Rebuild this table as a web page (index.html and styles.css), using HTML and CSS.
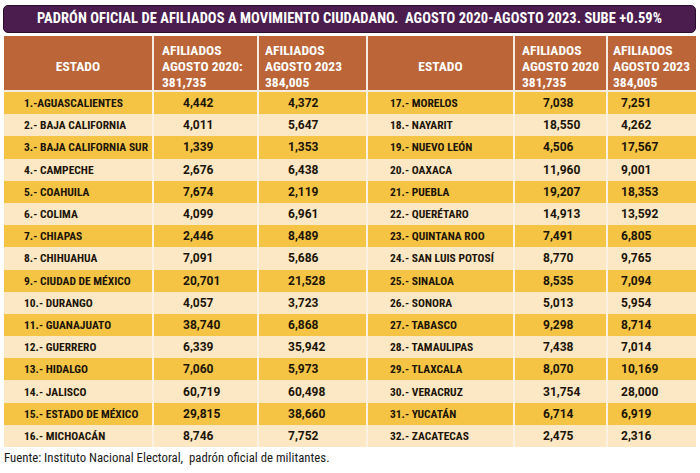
FILE: index.html
```html
<!DOCTYPE html>
<html lang="es">
<head>
<meta charset="utf-8">
<title>Padrón MC</title>
<link rel="stylesheet" href="styles.css">
</head>
<body>
<div class="page">
  <h1 class="title">PADRÓN OFICIAL DE AFILIADOS A MOVIMIENTO CIUDADANO.&nbsp; AGOSTO 2020-AGOSTO 2023. SUBE +0.59%</h1>
  <table class="padron">
    <colgroup>
      <col class="c-est1"><col class="c-a"><col class="c-b">
      <col class="c-est2"><col class="c-c"><col class="c-d">
    </colgroup>
    <thead>
      <tr>
        <th class="h-est">ESTADO</th>
        <th class="h-num h2">AFILIADOS<br>AGOSTO 2020:<br>381,735</th>
        <th class="h-num h3">AFILIADOS<br>AGOSTO 2023<br>384,005</th>
        <th class="h-est">ESTADO</th>
        <th class="h-num h5">AFILIADOS<br>AGOSTO 2020<br>381,735</th>
        <th class="h-num h6">AFILIADOS<br>AGOSTO 2023<br>384,005</th>
      </tr>
    </thead>
    <tbody>
      <tr class="odd"><td class="name">1.-AGUASCALIENTES</td><td class="n2">4,442</td><td class="n3">4,372</td><td class="name r">17.- MORELOS</td><td class="n5">7,038</td><td class="n6">7,251</td></tr>
      <tr class="even"><td class="name">2.- BAJA CALIFORNIA</td><td class="n2">4,011</td><td class="n3">5,647</td><td class="name r">18.- NAYARIT</td><td class="n5">18,550</td><td class="n6">4,262</td></tr>
      <tr class="odd"><td class="name">3.- BAJA CALIFORNIA SUR</td><td class="n2">1,339</td><td class="n3">1,353</td><td class="name r">19.- NUEVO LEÓN</td><td class="n5">4,506</td><td class="n6">17,567</td></tr>
      <tr class="even"><td class="name">4.- CAMPECHE</td><td class="n2">2,676</td><td class="n3">6,438</td><td class="name r">20.- OAXACA</td><td class="n5">11,960</td><td class="n6">9,001</td></tr>
      <tr class="odd"><td class="name">5.- COAHUILA</td><td class="n2">7,674</td><td class="n3">2,119</td><td class="name r">21.- PUEBLA</td><td class="n5">19,207</td><td class="n6">18,353</td></tr>
      <tr class="even"><td class="name">6.- COLIMA</td><td class="n2">4,099</td><td class="n3">6,961</td><td class="name r">22.- QUERÉTARO</td><td class="n5">14,913</td><td class="n6">13,592</td></tr>
      <tr class="odd"><td class="name">7.- CHIAPAS</td><td class="n2">2,446</td><td class="n3">8,489</td><td class="name r">23.- QUINTANA ROO</td><td class="n5">7,491</td><td class="n6">6,805</td></tr>
      <tr class="even"><td class="name">8.- CHIHUAHUA</td><td class="n2">7,091</td><td class="n3">5,686</td><td class="name r">24.- SAN LUIS POTOSÍ</td><td class="n5">8,770</td><td class="n6">9,765</td></tr>
      <tr class="odd"><td class="name">9.- CIUDAD DE MÉXICO</td><td class="n2">20,701</td><td class="n3">21,528</td><td class="name r">25.- SINALOA</td><td class="n5">8,535</td><td class="n6">7,094</td></tr>
      <tr class="even"><td class="name">10.- DURANGO</td><td class="n2">4,057</td><td class="n3">3,723</td><td class="name r">26.- SONORA</td><td class="n5">5,013</td><td class="n6">5,954</td></tr>
      <tr class="odd"><td class="name">11.- GUANAJUATO</td><td class="n2">38,740</td><td class="n3">6,868</td><td class="name r">27.- TABASCO</td><td class="n5">9,298</td><td class="n6">8,714</td></tr>
      <tr class="even"><td class="name">12.- GUERRERO</td><td class="n2">6,339</td><td class="n3">35,942</td><td class="name r">28.- TAMAULIPAS</td><td class="n5">7,438</td><td class="n6">7,014</td></tr>
      <tr class="odd"><td class="name">13.- HIDALGO</td><td class="n2">7,060</td><td class="n3">5,973</td><td class="name r">29.- TLAXCALA</td><td class="n5">8,070</td><td class="n6">10,169</td></tr>
      <tr class="even"><td class="name">14.- JALISCO</td><td class="n2">60,719</td><td class="n3">60,498</td><td class="name r">30.- VERACRUZ</td><td class="n5">31,754</td><td class="n6">28,000</td></tr>
      <tr class="odd"><td class="name">15.- ESTADO DE MÉXICO</td><td class="n2">29,815</td><td class="n3">38,660</td><td class="name r">31.- YUCATÁN</td><td class="n5">6,714</td><td class="n6">6,919</td></tr>
      <tr class="even"><td class="name">16.- MICHOACÁN</td><td class="n2">8,746</td><td class="n3">7,752</td><td class="name r">32.- ZACATECAS</td><td class="n5">2,475</td><td class="n6">2,316</td></tr>
    </tbody>
  </table>
  <p class="fuente">Fuente: Instituto Nacional Electoral,&nbsp; padrón oficial de militantes.</p>
</div>
</body>
</html>
```

FILE: styles.css
```css
html, body {
  margin: 0;
  padding: 0;
  background: #ffffff;
}

body {
  font-family: "Roboto Condensed", "DejaVu Sans Condensed", sans-serif;
  color: #1c1408;
}

.page {
  padding: 5px 4px 0 4px;
  width: 692px;
}

.title {
  margin: 0 0 0 -1px;
  width: 693px;
  box-sizing: border-box;
  height: 28px;
  line-height: 26px;
  background: #4b1d4f;
  border: 1px solid #2c0f2e;
  border-radius: 5px;
  color: #ffffff;
  font-size: 14.5px;
  font-weight: bold;
  letter-spacing: 0.05px;
  text-align: center;
  white-space: nowrap;
}

.padron {
  margin-top: 3px;
  width: 692px;
  table-layout: fixed;
  border-collapse: separate;
  border-spacing: 0;
}

.c-est1 { width: 148px; }
.c-a { width: 105px; }
.c-b { width: 109px; }
.c-est2 { width: 147px; }
.c-c { width: 93px; }
.c-d { width: 90px; }

.padron th,
.padron td {
  box-sizing: border-box;
}

.padron th {
  height: 56px;
  padding: 5px 0 0 7px;
  background: #bb6538;
  color: #ffffff;
  font-size: 13.5px;
  font-weight: bold;
  line-height: 16px;
  text-align: left;
  vertical-align: middle;
  border-left: 2px solid #f6ebe0;
  border-bottom: 2px solid #f6ebe0;
  white-space: nowrap;
}

.padron th.h-est {
  text-align: center;
  padding-left: 0;
}

.padron th.h2 { padding-left: 8px; }
.padron th.h3 { padding-left: 6px; }
.padron th.h5 { padding-left: 7px; }
.padron th.h6 { padding-left: 5px; }

.padron th:first-child,
.padron td:first-child {
  border-left: none;
}

.padron td {
  height: 22.2px;
  padding: 0;
  font-size: 11.5px;
  font-weight: bold;
  line-height: 14px;
  vertical-align: middle;
  border-left: 2px solid #fbf1e3;
  white-space: nowrap;
}

.odd td { background: #f5c445; }
.even td { background: #fce8c4; }

.padron td.name { padding-left: 20px; }
.padron td.name.r { padding-left: 22px; }

.padron td.n2,
.padron td.n3,
.padron td.n5,
.padron td.n6 {
  font-family: Roboto, "Liberation Sans", sans-serif;
  font-size: 12px;
}

.padron td.n2 { padding-left: 29px; }
.padron td.n3 { padding-left: 29px; }
.padron td.n5 { padding-left: 28px; }
.padron td.n6 { padding-left: 13px; }

.fuente {
  margin: 3px 0 0 0;
  font-size: 12.8px;
  color: #1a1a1a;
  font-weight: normal;
}
```
